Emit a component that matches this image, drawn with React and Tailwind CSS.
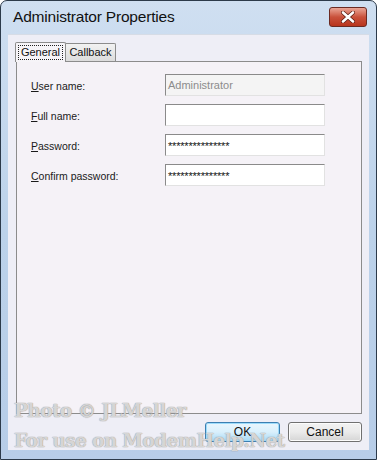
import React from "react";

function Field({ mn, rest, value, disabled, password }) {
  return (
    <div className="flex items-center h-[22px]">
      <div className="w-[134px] text-[10.5px] text-[#1a1a1a] mt-[3px]">
        <span className="underline underline-offset-[1px]">{mn}</span>
        {rest}
      </div>
      <div
        className={
          "w-[160px] h-[22px] border border-t-[#8a8a8a] border-l-[#8a8a8a] border-r-[#e2e2e2] border-b-[#e2e2e2] flex items-center px-[2px] " +
          (disabled ? "bg-[#f4f4f4] text-[#8c8c8c] text-[11px]" : "bg-white text-[#111] text-[11px]")
        }
      >
        <span className={password ? "tracking-[-0.2px] leading-none mt-[2px]" : ""}>{value}</span>
      </div>
    </div>
  );
}

export default function App() {
  return (
    <div
      className="relative w-[377px] h-[460px] border border-[#2c3a4a] rounded-t-[7px] bg-gradient-to-b from-[#cfdff1] via-[#bcd2ea] to-[#b7cde8] flex flex-col overflow-hidden"
      style={{ fontFamily: '"Liberation Sans", Arial, sans-serif' }}
    >
      <div className="h-[33px] flex items-center justify-between pl-[12px] pr-[9px] shrink-0">
        <div className="text-[15.5px] text-[#111] tracking-[-0.2px] mt-[-1px]">
          Administrator Properties
        </div>
        <div className="w-[38px] h-[20px] mt-[-2px] rounded-[3px] border border-[#6b2a22] bg-gradient-to-b from-[#e9a596] via-[#c9513b] to-[#b8341c] flex items-center justify-center">
          <svg width="14" height="12" viewBox="0 0 14 12">
            <path d="M2 1.5 L12 10.5 M12 1.5 L2 10.5" stroke="#5a1a10" strokeWidth="4" strokeLinecap="round" />
            <path d="M2 1.5 L12 10.5 M12 1.5 L2 10.5" stroke="#ffffff" strokeWidth="2.6" strokeLinecap="round" />
          </svg>
        </div>
      </div>
      <div className="mx-[7px] h-[416px] bg-[#eeeef6] border-t border-[#d6dce6] flex flex-col">
        <div className="flex pl-[7px] mt-[7px] h-[19px] items-end">
          <div className="h-[20px] w-[51px] bg-[#f6f4f8] border border-b-0 border-[#8c8c8c] rounded-t-[2px] flex items-center justify-center relative z-10 mb-[-1px]">
            <span className="text-[11px] text-[#111] border border-dotted border-[#222] px-[2px] leading-[13px]">
              General
            </span>
          </div>
          <div className="h-[18px] w-[50px] bg-gradient-to-b from-[#f2f2f2] to-[#dcdcdc] border border-b-0 border-l-0 border-[#8c8c8c] rounded-tr-[2px] flex items-center justify-center">
            <span className="text-[11px] text-[#111]">Callback</span>
          </div>
        </div>
        <div className="ml-[8px] w-[346px] h-[353px] border border-[#8c8c8c] bg-[#f5f2f7] pt-[12px] pl-[14px] flex flex-col gap-[8px]">
          <Field mn="U" rest="ser name:" value="Administrator" disabled />
          <Field mn="F" rest="ull name:" value="" />
          <Field mn="P" rest="assword:" value="***************" password />
          <Field mn="C" rest="onfirm password:" value="***************" password />
        </div>
        <div className="flex justify-end gap-[8px] pr-[7px] mt-[8px]">
          <div className="w-[75px] h-[20px] rounded-[3px] border border-[#3c7fb1] bg-gradient-to-b from-[#eaf6fd] via-[#d9f0fc] to-[#a7d9f5] shadow-[inset_0_0_0_1px_#9ddcfb] flex items-center justify-center text-[12px] text-[#111]">
            OK
          </div>
          <div className="w-[74px] h-[20px] rounded-[3px] border border-[#707070] bg-gradient-to-b from-[#f2f2f2] via-[#ebebeb] to-[#d5d5d5] shadow-[inset_0_0_0_1px_#fcfcfc] flex items-center justify-center text-[12px] text-[#111]">
            Cancel
          </div>
        </div>
      </div>
      <div
        className="absolute left-[13px] top-[395px] text-[18.5px] font-bold leading-[30px] tracking-[-0.6px] text-white/60 [text-shadow:0_0_1px_#9a9a9a,0_0_1px_#9a9a9a] pointer-events-none"
        style={{ fontFamily: '"DejaVu Serif", serif' }}
      >
        <div>Photo © JLMeller</div>
        <div>For use on ModemHelp.Net</div>
      </div>
    </div>
  );
}
